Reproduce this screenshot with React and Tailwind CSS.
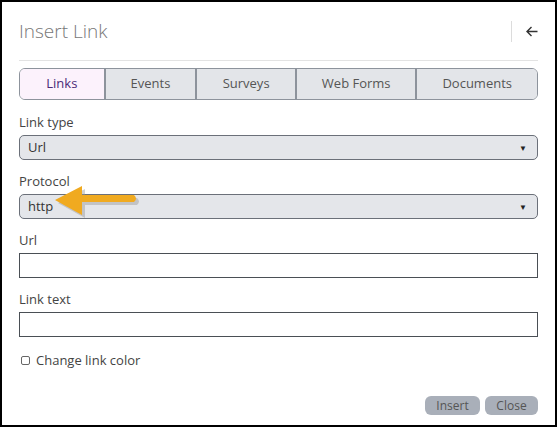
import React from 'react';

const tabs = [
  { label: 'Links', w: 'w-[84px]', active: true },
  { label: 'Events', w: 'w-[92px]' },
  { label: 'Surveys', w: 'w-[100px]' },
  { label: 'Web Forms', w: 'w-[121px]' },
  { label: 'Documents', w: 'w-[122px]' },
];

const Select = ({ value }) => (
  <div className="flex h-[25px] items-center justify-between rounded-[5px] border border-[#6b7079] bg-[#e4e6ea] pl-[8px] pr-[10px] text-[13px] text-[#333]">
    <span>{value}</span>
    <span className="text-[8px] text-[#222]">▼</span>
  </div>
);

const Label = ({ children, className = '' }) => (
  <div className={`h-[18px] text-[13px] leading-[18px] text-[#444] ${className}`}>{children}</div>
);

const App = () => {
  return (
    <div
      className="flex h-[427px] w-[557px] flex-col border-2 border-black bg-white px-[17px]"
      style={{ fontFamily: '"Open Sans", "Liberation Sans", sans-serif' }}
    >
      <div className="flex h-[59px] items-center justify-between border-b border-[#e3e3e3]">
        <h1 className="text-[19px] font-light text-[#777]">Insert Link</h1>
        <div className="flex items-center">
          <div className="h-[21px] w-px bg-[#dcdcdc]" />
          <svg className="ml-[14px]" width="12" height="11" viewBox="0 0 12 11" fill="none" stroke="#333" strokeWidth="1.4">
            <path d="M11.5 5.5H1.2M5.5 1L1 5.5L5.5 10" />
          </svg>
        </div>
      </div>

      <div className="mt-[7px] flex h-[32px] overflow-hidden rounded-[6px] border border-[#8d939c]">
        {tabs.map((t, i) => (
          <div
            key={t.label}
            className={`flex items-center justify-center text-[13px] ${t.w} ${i > 0 ? 'border-l-2 border-[#8d939c]' : ''} ${
              t.active ? 'bg-[#fcf2fc] text-[#4b2a78]' : 'bg-[#e3e5e9] text-[#555]'
            }`}
          >
            {t.label}
          </div>
        ))}
      </div>

      <Label className="mt-[13px]">Link type</Label>
      <div className="mt-[4px]">
        <Select value="Url" />
      </div>

      <Label className="mt-[12px]">Protocol</Label>
      <div className="relative mt-[4px]">
        <Select value="http" />
        <svg className="absolute left-[33px] top-[-8px]" width="92" height="38" viewBox="0 0 92 38">
          <g transform="translate(2 2)" fill="#9a9a9a" opacity="0.45">
            <path d="M4 15 L31 1 L31 10 L83 10 Q87 13.5 83 17 L31 17 L31 30 Z" />
          </g>
          <path d="M3 14 L30 0 L30 9 L82 9 Q86 12.5 82 16 L30 16 L30 29 Z" fill="#f0aa20" />
        </svg>
      </div>

      <Label className="mt-[12px]">Url</Label>
      <div className="mt-[4px] h-[25px] border border-[#4a4f55] bg-white" />

      <Label className="mt-[12px]">Link text</Label>
      <div className="mt-[4px] h-[25px] border border-[#4a4f55] bg-white" />

      <div className="mt-[14px] flex items-center">
        <div className="ml-[2px] h-[9px] w-[9px] rounded-[2px] border border-[#666] bg-white" />
        <span className="ml-[6px] text-[13px] text-[#444]">Change link color</span>
      </div>

      <div className="mt-[25px] flex justify-end gap-[5px]">
        <button className="h-[19px] w-[55px] rounded-[6px] bg-[#a9afb9] text-[12px] leading-[19px] text-[#555]">Insert</button>
        <button className="h-[19px] w-[53px] rounded-[6px] bg-[#a9afb9] text-[12px] leading-[19px] text-[#555]">Close</button>
      </div>
    </div>
  );
};

export default App;
